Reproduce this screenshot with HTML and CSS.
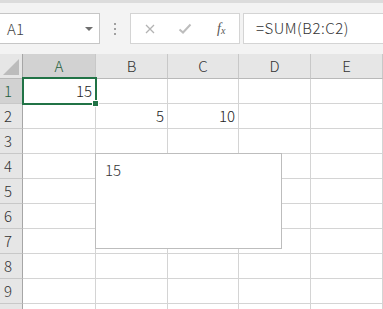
FILE: index.html
```html
<!DOCTYPE html>
<html>
<head>
<meta charset="utf-8">
<link rel="stylesheet" href="styles.css">
</head>
<body>
<div class="app">
  <div class="edge"></div>
  <div class="fbar">
    <div class="namebox">
      <span class="name">A1</span>
      <span class="caret"></span>
    </div>
    <div class="dots"><i></i><i></i><i></i></div>
    <div class="btns">
      <svg class="ico" width="14" height="14" viewBox="0 0 14 14"><path d="M3 3 L11 11 M11 3 L3 11" stroke="#b3b3b3" stroke-width="1.3" fill="none"/></svg>
      <svg class="ico" width="16" height="14" viewBox="0 0 16 14"><path d="M2.5 7.5 L6 10.5 L13.5 2.5" stroke="#bdbdbd" stroke-width="2" fill="none"/></svg>
      <span class="fx">f<sub>x</sub></span>
    </div>
    <div class="input">=SUM(B2:C2)</div>
  </div>
  <div class="sheet">
    <div class="grid">
      <div class="hd corner"><span class="tri"></span></div>
      <div class="hd col sel">A</div>
      <div class="hd col">B</div>
      <div class="hd col">C</div>
      <div class="hd col">D</div>
      <div class="hd col">E</div>

      <div class="hd row sel">1</div>
      <div class="c num">15</div><div class="c"></div><div class="c"></div><div class="c"></div><div class="c"></div>

      <div class="hd row">2</div>
      <div class="c"></div><div class="c num">5</div><div class="c num">10</div><div class="c"></div><div class="c"></div>

      <div class="hd row">3</div>
      <div class="c"></div><div class="c"></div><div class="c"></div><div class="c"></div><div class="c"></div>

      <div class="hd row">4</div>
      <div class="c"></div><div class="c"></div><div class="c"></div><div class="c"></div><div class="c"></div>

      <div class="hd row">5</div>
      <div class="c"></div><div class="c"></div><div class="c"></div><div class="c"></div><div class="c"></div>

      <div class="hd row">6</div>
      <div class="c"></div><div class="c"></div><div class="c"></div><div class="c"></div><div class="c"></div>

      <div class="hd row">7</div>
      <div class="c"></div><div class="c"></div><div class="c"></div><div class="c"></div><div class="c"></div>

      <div class="hd row">8</div>
      <div class="c"></div><div class="c"></div><div class="c"></div><div class="c"></div><div class="c"></div>

      <div class="hd row">9</div>
      <div class="c"></div><div class="c"></div><div class="c"></div><div class="c"></div><div class="c"></div>

      <div class="hd row"></div>
      <div class="c"></div><div class="c"></div><div class="c"></div><div class="c"></div><div class="c"></div>
    </div>
    <div class="selection"><span class="handle"></span></div>
    <div class="textbox">15</div>
  </div>
</div>
</body>
</html>
```
FILE: styles.css
```css
html, body {
  margin: 0;
  padding: 0;
  background: #ffffff;
  overflow: hidden;
}
body {
  width: 383px;
  height: 309px;
  font-family: "Noto Sans CJK JP", "Noto Sans", sans-serif;
  font-weight: 300;
  color: #222;
}
.app {
  width: 383px;
  height: 309px;
  overflow: hidden;
  display: flex;
  flex-direction: column;
}
.edge {
  height: 3px;
  background: #dcdcdc;
  flex: none;
}
.fbar {
  height: 51px;
  flex: none;
  background: #f3f3f3;
  box-sizing: border-box;
  padding-top: 10px;
  display: flex;
  align-items: flex-start;
}
.namebox {
  width: 101px;
  height: 31px;
  margin-left: -1px;
  box-sizing: border-box;
  border: 1px solid #c6c6c6;
  background: #fff;
  display: flex;
  align-items: center;
  justify-content: space-between;
  padding: 0 6px 0 7px;
}
.name {
  font-size: 15px;
  color: #444;
  line-height: 1;
  letter-spacing: 0.3px;
}
.caret {
  width: 0;
  height: 0;
  border-left: 4px solid transparent;
  border-right: 4px solid transparent;
  border-top: 4px solid #6f6f6f;
  margin-top: 1px;
}
.dots {
  width: 30px;
  height: 31px;
  display: flex;
  flex-direction: column;
  align-items: center;
  justify-content: center;
  gap: 3px;
}
.dots i {
  display: block;
  width: 2px;
  height: 2px;
  background: #a0a0a0;
}
.btns {
  width: 110px;
  height: 31px;
  box-sizing: border-box;
  border: 1px solid #d4d4d4;
  background: #fff;
  display: flex;
  align-items: center;
  padding-left: 12px;
  gap: 20px;
}
.fx {
  font-family: "Liberation Serif", serif;
  font-style: italic;
  font-weight: 400;
  font-size: 14px;
  color: #555;
  margin-left: 4px;
}
.fx sub {
  font-size: 10px;
  vertical-align: -1px;
}
.input {
  margin-left: 3px;
  flex: 1;
  height: 31px;
  box-sizing: border-box;
  border: 1px solid #d4d4d4;
  border-right: none;
  background: #fff;
  font-size: 15px;
  color: #333;
  line-height: 28px;
  padding-left: 12px;
  letter-spacing: 0.5px;
  white-space: nowrap;
}
.sheet {
  position: relative;
  flex: none;
}
.grid {
  display: grid;
  grid-template-columns: 23px 73px 72px 71px 72px 72px;
  grid-auto-rows: 25px;
}
.hd {
  background: #e6e6e6;
  box-sizing: border-box;
  border-right: 1px solid #c8c8c8;
  border-bottom: 1px solid #c8c8c8;
  font-size: 15px;
  color: #333;
  line-height: 24px;
}
.col {
  text-align: center;
  border-bottom-color: #b9b9b9;
}
.row {
  padding-left: 4px;
  border-right-color: #a6a6a6;
  border-bottom-color: #c8c8c8;
}
.hd.sel {
  background: #d2d2d2;
  color: #1f5f3c;
}
.corner {
  position: relative;
  border-right-color: #a6a6a6;
  border-bottom-color: #b9b9b9;
}
.tri {
  position: absolute;
  right: 3px;
  bottom: 3px;
  width: 0;
  height: 0;
  border-left: 16px solid transparent;
  border-bottom: 16px solid #bcbcbc;
}
.c {
  box-sizing: border-box;
  border-right: 1px solid #d4d4d4;
  border-bottom: 1px solid #d4d4d4;
  font-size: 15px;
  line-height: 24px;
  color: #222;
}
.num {
  text-align: right;
  padding-right: 3px;
}
.selection {
  position: absolute;
  left: 22px;
  top: 23px;
  width: 75px;
  height: 28px;
  box-sizing: border-box;
  border: 2px solid #217346;
}
.handle {
  position: absolute;
  right: -4px;
  bottom: -4px;
  width: 5px;
  height: 5px;
  background: #217346;
  border: 1px solid #fff;
}
.textbox {
  position: absolute;
  left: 95px;
  top: 99px;
  width: 187px;
  height: 96px;
  box-sizing: border-box;
  border: 1px solid #bdbdbd;
  background: #fff;
  font-size: 15px;
  color: #333;
  padding: 6px 0 0 9px;
  line-height: 20px;
}
```
